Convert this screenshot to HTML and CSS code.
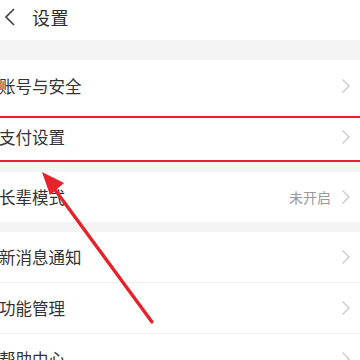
FILE: index.html
```html
<!DOCTYPE html>
<html lang="zh-CN">
<head>
<meta charset="utf-8">
<link rel="stylesheet" href="styles.css">
</head>
<body>
<div class="page">
  <header class="topbar">
    <svg class="back" width="14" height="20" viewBox="0 0 14 20"><path d="M11 2 L3 10 L11 18" fill="none" stroke="#444" stroke-width="1.7"/></svg>
    <span class="title">设置</span>
  </header>
  <div class="gap gap-lg"></div>
  <div class="row r1"><span class="label">账号与安全</span><svg class="chev" width="10" height="16" viewBox="0 0 10 16"><path d="M1.5 1.5 L8 8 L1.5 14.5" fill="none" stroke="#c8c8c8" stroke-width="1.3"/></svg></div>
  <div class="row r2"><span class="label">支付设置</span><svg class="chev" width="10" height="16" viewBox="0 0 10 16"><path d="M1.5 1.5 L8 8 L1.5 14.5" fill="none" stroke="#c8c8c8" stroke-width="1.3"/></svg></div>
  <div class="gap"></div>
  <div class="row"><span class="label">长辈模式</span><span class="value">未开启</span><svg class="chev" width="10" height="16" viewBox="0 0 10 16"><path d="M1.5 1.5 L8 8 L1.5 14.5" fill="none" stroke="#c8c8c8" stroke-width="1.3"/></svg></div>
  <div class="gap"></div>
  <div class="row line"><span class="label">新消息通知</span><svg class="chev" width="10" height="16" viewBox="0 0 10 16"><path d="M1.5 1.5 L8 8 L1.5 14.5" fill="none" stroke="#c8c8c8" stroke-width="1.3"/></svg></div>
  <div class="row line"><span class="label">功能管理</span><svg class="chev" width="10" height="16" viewBox="0 0 10 16"><path d="M1.5 1.5 L8 8 L1.5 14.5" fill="none" stroke="#c8c8c8" stroke-width="1.3"/></svg></div>
  <div class="row"><span class="label">帮助中心</span><svg class="chev" width="10" height="16" viewBox="0 0 10 16"><path d="M1.5 1.5 L8 8 L1.5 14.5" fill="none" stroke="#c8c8c8" stroke-width="1.3"/></svg></div>

  <div class="highlight"></div>
  <svg class="arrow" width="360" height="360" viewBox="0 0 360 360">
    <line x1="152" y1="322" x2="53" y2="187" stroke="#e8222b" stroke-width="3.4" stroke-linecap="round"/>
    <polygon points="42,172 64,183 50,195" fill="#e8222b"/>
  </svg>
</div>
</body>
</html>
```
FILE: styles.css
```css
* { box-sizing: border-box; }
html, body { margin: 0; padding: 0; background: #fff; }
body {
  font-family: "Noto Sans CJK SC", "Noto Sans", sans-serif;
  color: #333;
  width: 360px;
  height: 360px;
  overflow: hidden;
}
.page { position: relative; width: 360px; height: 360px; overflow: hidden; }
.topbar {
  height: 40px;
  display: flex;
  align-items: center;
  padding-left: 3px;
  gap: 15px;
  padding-bottom: 6px;
}
.back { display: block; }
.title { font-size: 18px; color: #2e2e2e; letter-spacing: 0.5px; }
.gap { height: 10px; background: #f4f4f4; }
.gap-lg { height: 20px; }
.row {
  height: 50px;
  display: flex;
  align-items: center;
  padding: 0 9px 0 0;
  background: #fff;
}
.r1 { height: 52px; }
.line { border-bottom: 1px solid #efefef; height: 51px; }
.label { font-size: 16.5px; color: #333; flex: 1; margin-left: -1px; }
.value { font-size: 14px; color: #999; margin-right: 10px; }
.chev { display: block; }
.highlight {
  position: absolute;
  left: -3px; right: -3px;
  top: 116px; height: 46px;
  border: 2px solid #e8222b;
  pointer-events: none;
}
.arrow { position: absolute; left: 0; top: 0; pointer-events: none; }
```
